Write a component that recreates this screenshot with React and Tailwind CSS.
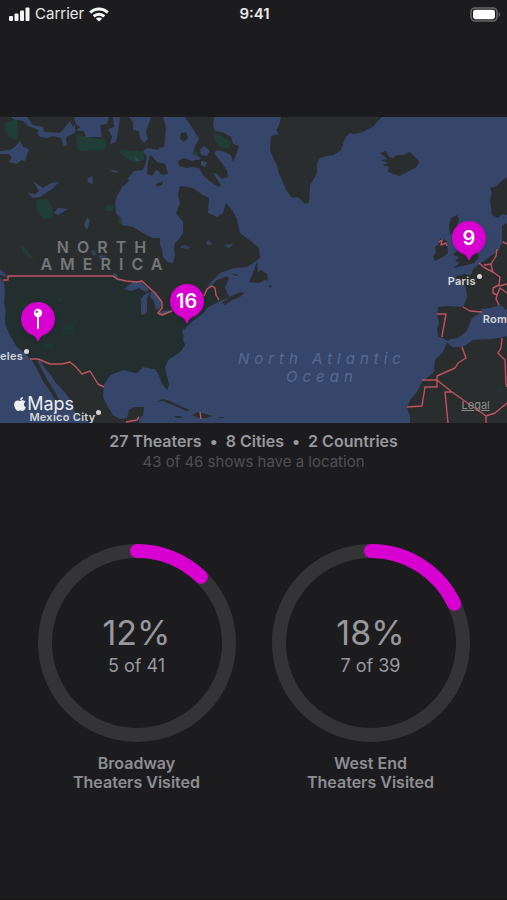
import React from 'react';
import { FaApple } from 'react-icons/fa';

const rings = [
    { name: 'Broadway', visited: 5, total: 41 },
    { name: 'West End', visited: 7, total: 39 },
];

const StatusBar = () => (
    <header className="grid h-7 grid-cols-3 items-center pr-1.5 pl-2 text-[15px] leading-5 text-[#e8e8e8]">
        <div className="flex items-center gap-[5px]">
            <svg viewBox="0 0 22 14" className="h-3.5 w-[22px]" fill="#f5f5f5" aria-hidden="true">
                <rect x="1" y="9" width="4" height="5" rx="1" />
                <rect x="6.5" y="6.5" width="4" height="7.5" rx="1" />
                <rect x="12" y="3.5" width="4" height="10.5" rx="1" />
                <rect x="17.5" y="0.5" width="4" height="13.5" rx="1" />
            </svg>
            <span>Carrier</span>
            <svg viewBox="0 0 20 15" className="h-[15px] w-5" fill="none" stroke="#f5f5f5" strokeWidth="3" aria-hidden="true">
                <path d="M1.2 5.6C6.2 0.8 13.8 0.8 18.8 5.6" />
                <path d="M4.7 9.3C7.7 6.4 12.3 6.4 15.3 9.3" />
                <path d="M10 14.6L6.8 11.6C8.6 10 11.4 10 13.2 11.6Z" fill="#f5f5f5" stroke="none" />
            </svg>
        </div>
        <span className="text-center font-semibold">9:41</span>
        <svg viewBox="0 0 31 15" className="h-[15px] w-[31px] justify-self-end" aria-hidden="true">
            <rect x="1" y="1" width="26" height="13" rx="4" fill="#1c1c1e" stroke="#66666a" strokeWidth="1.6" />
            <rect x="3" y="2.8" width="22" height="9.4" rx="2.4" fill="#fff" />
            <path d="M28.6 5.2C30.6 5.8 30.6 9.2 28.6 9.8Z" fill="#66666a" />
        </svg>
    </header>
);

const MapTerrain = () => (
    <svg viewBox="0 0 507 306" className="block h-full w-full bg-[#35466a]" aria-hidden="true">
        {/* Land */}
        <g fill="#2a2d2e">
            <path d="M0 0H163L166 10L165 21L161 29L158 33L147 31L143 34L147 40L145 48L143 53L134 54L128 61L129 64L122 70L117 79L115 86L116 96L120 101L122 108L133 110L143 116L152 121L160 121L160 127L162 133L163 140L168 145L173 146L175 138L174 131L175 126L180 121L183 116L183 105L176 96L180 86L178 78L180 69L193 71L203 78L209 81L208 96L217 100L223 96L226 86L232 93L237 102L238 108L240 116L252 125L259 131L260 141L257 144L247 150L234 151L226 154L220 156L210 166L205 176L208 172L217 163L227 159L229 162L225 170L227 176L230 180L218 185L208 190L203 196L193 203L188 208L184 213L183 223L185 228L180 235L168 243L165 250L165 258L169 268L167 273L162 267L158 256L155 252L143 250L137 256L123 253L110 258L104 266L103 280L108 290L113 298L120 302L127 301L129 293L134 290L144 290L143 298L139 302V306H90L80 300L75 296L72 285L67 278L60 270L55 265L50 257L45 251L41 245L37 243L41 251L47 262L55 275L59 283L56 284L48 271L44 266L40 258L36 250L30 241L25 236L17 230L10 218L5 206L6 196L4 186L5 174L4 166L0 160Z" />
            <path d="M185 0H214L213 8L215 14L222 15L231 20L233 27L239 29L237 36L233 45L231 38L225 35L217 33L214 36L222 46L227 54L228 60L222 62L217 57L213 56L221 68L219 70L212 66L203 58L199 51L192 50L187 51L179 49L178 44L184 41L192 44L201 42L197 38L193 36L195 29L199 22L193 12Z" />
            <path d="M181 16L186 15L188 21L184 25L180 22ZM150 37L157 45L165 47L168 57L163 57L156 53L152 59L147 57L148 45ZM156 67L163 64L162 68L157 70ZM160 20L165 22L164 30L160 31ZM160 50L167 55L165 58L160 57Z" />
            <path d="M200 33L204 29L210 34L207 39L201 38Z" fill="#35466a" />
            <path d="M201 44L207 45L205 50L201 48Z" fill="#35466a" />
            <path d="M257 144L258 155L261 153L267 157L268 164L264 163L260 166L249 165L253 156ZM230 156L239 158L236 159ZM222 186L230 180L240 175L244 176L240 180L232 183L225 188ZM268 169L272 168L271 171Z" />
            <path d="M155 285L163 282L170 284L180 289L190 293L186 294L180 291L170 287L163 284ZM192 298L198 295L213 299L206 301L199 301ZM174 299L181 299L182 301L177 301ZM219 300H224V301H219Z" />
            <path d="M266 0H281L279 8L276 13L279 17L271 19L270 33L275 45L277 48L279 57L282 63L286 73L292 81L298 80L305 87L309 86L310 68L315 60L317 56L317 46L320 41L327 39L334 38L341 33L345 21L350 16L354 17L363 15L370 11L373 10L377 5L382 0Z" />
            <path d="M380 36L386 34L389 40L393 41L397 38L403 38L410 35L415 40L419 44L418 48L415 51L407 55L400 59L393 57L388 55L389 50L382 48L388 46L381 43L387 42L384 39Z" />
            <path d="M507 60L500 65L497 69L490 71L492 76L490 82L491 90L492 98L498 101L502 97L507 98ZM507 106L502 109L502 124L507 126Z" />
            <path d="M457 98L451 101L449 109L450 118L454 115L452 122L458 126L458 132L453 138L459 140L455 144L460 146L453 151L463 149L474 146L479 140L476 130L466 117L460 110L457 108L459 102ZM440 121L447 124L448 136L443 140L435 144L433 140L436 136L435 130L439 127Z" />
            <path d="M507 124L501 127L499 133L492 138L485 143L478 148L473 152L471 158L464 157L455 160L463 166L466 171L467 180L463 190L450 189L438 190L437 198L439 206L437 212L438 220L443 221L447 224L451 222L458 221L466 215L470 206L472 201L480 196L482 192L490 191L500 188L507 193Z" />
            <path d="M447 225L443 235L435 243L434 255L422 265L417 275L410 283L407 291L410 299L410 306H507V219L500 221L490 222L473 223L466 228L462 230L452 230Z" />
        </g>

        {/* Parks and the greener tint of the United States */}
        <path d="M8 159H113L123 166L135 171L145 175L147 198L158 198L172 195L205 178L212 170L217 178L218 185L208 190L203 196L188 208L184 213L183 223L185 228L180 235L168 243L165 250L169 268L167 273L158 256L155 252L143 250L137 256L123 253L110 258L104 268L98 267L90 254L82 257L70 245L50 247L38 242L30 241L25 236L17 230L10 218L5 206L6 186Z" fill="#232f2f" />
        <g fill="#1e4238">
            <path d="M6 5L17 2L18 12L17 23L9 20L5 12ZM76 18L90 20L107 23L105 33L78 34ZM118 33L143 34L145 43L135 46L127 42ZM36 83L47 82L53 91L52 101L44 102L37 94ZM105 89L114 88L113 94L106 94ZM119 98L122 101L122 107L118 106ZM214 16L221 19L231 25L229 32L221 30L215 24ZM20 129L27 132L30 138L36 143L24 137ZM192 38L196 32L198 39Z" opacity="0.8" />
            <path d="M21 187L30 185L30 192L23 194ZM55 180L62 180L61 187ZM63 208L77 203L72 218L62 217ZM41 225L55 228L53 232L42 230ZM495 270L502 267L504 273L497 276Z" opacity="0.35" />
        </g>

        {/* Lakes and arctic channels */}
        <g fill="#35466a">
            <path d="M11 0H27L33 8L43 10L45 17L37 17L39 13L28 9L23 4L13 2Z" />
            <path d="M38 17L47 15L60 16L66 9L70 4L73 10L75 7V16L66 20L67 28L64 30L61 21L53 19L48 21L40 20Z" />
            <path d="M74 0H109L107 7L100 8L102 20L93 20L86 20L84 14L76 14L80 10L76 7ZM108 12L114 10L113 0H120L118 15L116 25L110 27L112 20Z" />
            <path d="M129 0H151L148 9L146 14L148 22L144 26L140 21L139 14L133 13L133 5Z" />
            <path d="M0 34L10 33L16 29L20 24L23 30L29 32L27 38L25 44L21 43L17 47L9 45L12 40L9 37L0 37Z" />
            <path d="M27 76L35 77L39 74L33 64L43 71L51 66L59 65L52 72L44 77L40 80L33 81ZM54 96L58 91L68 92L58 98ZM84 108L87 101L90 103L87 113ZM87 62L92 59L93 67L89 66ZM110 53L114 53L119 55L113 55ZM134 39L140 44L136 44Z" />
            <path d="M91 134L95 133L96 138L93 139ZM98 139L105 138L107 143L101 142ZM180 130L184 128L190 130L188 132L181 131ZM206 125L209 123L212 127L208 129ZM224 128L234 127L229 131Z" opacity="0.8" />
            <path d="M124 172L129 168L133 165L140 164L149 172L146 175L139 171L131 174ZM141 182L144 178L150 175L147 182L147 194L144 198L141 197ZM151 174L158 178L162 185L160 191L156 193L154 184L150 180ZM156 197L162 194L172 193L165 197ZM113 156L117 157L118 162L114 161ZM166 141L172 143L173 147Z" />
            <path d="M0 152L8 160L0 158ZM253 146L260 141L258 145Z" />
            <path d="M184 210L185 219L182 216Z" />
        </g>

        {/* Country borders */}
        <g fill="none" stroke="#c1525f" strokeWidth="1.4" strokeLinejoin="round">
            <path d="M3 163H8V159H113L117 162L126 164L137 165L142 164L155 176L162 185L162 191L158 196L162 198L172 194M204 179L207 172L212 169L215 171L216 178L219 183" />
            <path d="M30 242H38L50 247L62 247L70 245L76 250L82 257L90 254L98 267L104 270M126 305L137 303L139 300M200 295L201 302" />
            <path d="M437 197H446L444 208L443 213L442 220M463 190L470 194L482 195" />
            <path d="M479 146L485 151L493 155L500 160L499 168L493 171L493 176L497 178L496 182L499 188M484 148L491 147L496 139L497 132M491 147L493 156M499 169L507 167M497 178L500 171L507 176M503 125L507 127" />
            <path d="M439 125L442 123L441 128L446 126L447 129" />
            <path d="M462 230L466 241L458 246L455 251L437 259V270H425L422 289L407 290M422 263H437L452 275L486 299L495 296L507 286M486 299V306M452 275H445L448 306M502 221L501 231L498 236L505 243L506 268L507 270" />
        </g>
    </svg>
);

const MapPin = ({ className, label, children }) => (
    <div
        role="img"
        aria-label={label}
        className={`absolute flex h-10 w-[34px] -translate-x-1/2 justify-center text-xl leading-[34px] font-semibold text-white ${className}`}
    >
        <svg viewBox="0 0 34 40" className="absolute inset-0 h-full w-full overflow-visible drop-shadow-sm" aria-hidden="true">
            <path d="M17 0A17 17 0 0 0 11.6 33.1C14 34.2 15.2 36 16.2 38.6Q17 40 17.8 38.6C18.8 36 20 34.2 22.4 33.1A17 17 0 0 0 17 0Z" fill="#d800d0" />
        </svg>
        <span className="relative">{children}</span>
    </div>
);

const TheaterMap = () => (
    <section className="relative aspect-[507/306] w-full overflow-hidden" aria-label="Map of theaters">
        <MapTerrain />

        <div className="absolute top-[40%] left-[20.8%] -translate-x-1/2 text-center text-base leading-[17px] font-semibold tracking-[8px] whitespace-nowrap text-[#757779]">
            NORTH<br />AMERICA
        </div>
        <div className="absolute top-[76%] left-[63.5%] -translate-x-1/2 text-center text-[15px] leading-[18px] tracking-[5px] whitespace-nowrap text-[#566a94] italic">
            North Atlantic<br />Ocean
        </div>

        <div className="absolute top-[75.5%] left-0 flex gap-px text-[11px] leading-4 font-semibold tracking-wide text-[#d5d6d8]">
            eles
            <span className="mt-px size-[5px] rounded-full bg-[#d5d6d8]" />
        </div>
        <div className="absolute top-[95.5%] left-[5.8%] flex gap-px text-[11px] leading-4 font-semibold tracking-wide whitespace-nowrap text-[#d5d6d8]">
            Mexico City
            <span className="mt-px size-[5px] rounded-full bg-[#d5d6d8]" />
        </div>
        <div className="absolute top-[51%] left-[88.3%] flex gap-px text-[11px] leading-4 font-semibold tracking-wide text-[#d5d6d8]">
            Paris
            <span className="mt-px size-[5px] rounded-full bg-[#d5d6d8]" />
        </div>
        <div className="absolute top-[63.5%] left-[95.2%] text-[11px] leading-4 font-semibold tracking-wide text-[#d5d6d8]">
            Rome
        </div>

        <div className="absolute top-[90%] left-[2.6%] flex items-center text-lg leading-6 text-[#eeeeee]">
            <FaApple className="h-4 w-3.5" aria-hidden="true" />
            Maps
        </div>
        <a href="#legal" className="absolute top-[91.5%] right-[3.4%] text-[11px] leading-4 text-[#8d8f91] underline">
            Legal
        </a>

        <MapPin className="top-[60.5%] left-[7.5%]" label="Los Angeles theater">
            <svg viewBox="0 0 10 34" className="h-[34px] w-2.5" aria-hidden="true">
                <path d="M5 12V26" stroke="#fff" strokeWidth="2" strokeLinecap="round" />
                <circle cx="5" cy="11" r="4.2" fill="#fff" />
                <circle cx="3.7" cy="9.8" r="1.2" fill="#d800d0" />
            </svg>
        </MapPin>
        <MapPin className="top-[54.5%] left-[36.8%]" label="16 theaters">16</MapPin>
        <MapPin className="top-[34%] left-[92.5%]" label="9 theaters">9</MapPin>
    </section>
);

const ProgressRing = ({ name, visited, total }) => {
    const radius = 92;
    const circumference = 2 * Math.PI * radius;
    const ratio = visited / total;

    return (
        <div className="flex flex-col items-center gap-3">
            <div className="relative size-[198px]">
                <svg viewBox="0 0 198 198" className="size-full -rotate-90" fill="none" strokeWidth="14" aria-hidden="true">
                    <circle cx="99" cy="99" r={radius} stroke="#343437" />
                    <circle
                        cx="99"
                        cy="99"
                        r={radius}
                        stroke="#d800d0"
                        strokeLinecap="round"
                        strokeDasharray={`${circumference * ratio} ${circumference}`}
                    />
                </svg>
                <div className="absolute inset-0 flex flex-col items-center justify-center gap-px pt-1 text-[#98989d]">
                    <span className="text-[34px] leading-10">{Math.round(ratio * 100)}%</span>
                    <span className="text-lg leading-6">{visited} of {total}</span>
                </div>
            </div>
            <h2 className="text-center text-base leading-[19px] font-semibold text-[#8e8e93]">
                {name}<br />Theaters Visited
            </h2>
        </div>
    );
};

export default function App() {
    return (
        <div className="flex min-h-screen flex-col border-b border-[#1f1519] bg-[#1c1c1e] font-['Inter',sans-serif]">
            <StatusBar />

            <main className="pt-[89px]">
                <TheaterMap />

                <div className="pt-2 text-center">
                    <p className="flex justify-center gap-2 text-base leading-5 font-semibold text-[#98989d]">
                        <span>27 Theaters</span>
                        <span>•</span>
                        <span>8 Cities</span>
                        <span>•</span>
                        <span>2 Countries</span>
                    </p>
                    <p className="text-[15px] leading-[22px] text-[#505053]">43 of 46 shows have a location</p>
                </div>

                <div className="flex flex-wrap justify-center gap-9 pt-[71px]">
                    {rings.map((ring) => (
                        <ProgressRing key={ring.name} {...ring} />
                    ))}
                </div>
            </main>
        </div>
    );
}
